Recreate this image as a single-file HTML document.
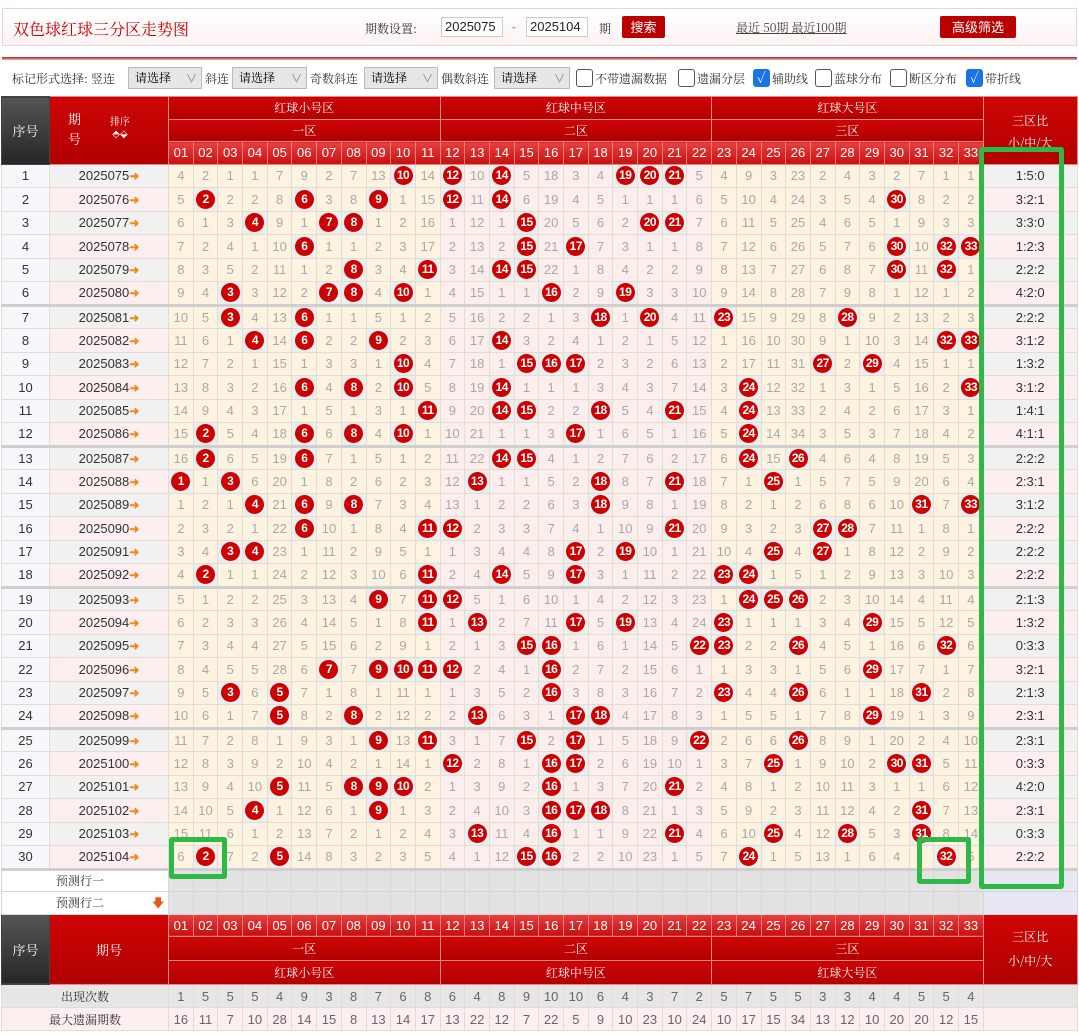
<!DOCTYPE html>
<html><head><meta charset="utf-8">
<style>
*{box-sizing:border-box;margin:0;padding:0}
body{width:1079px;height:1036px;overflow:hidden;background:#fff;font-family:"Liberation Sans","Noto Serif CJK SC",serif;position:relative}
#top{position:absolute;left:2px;top:8px;width:1075px;height:38px;border:1px solid #f2d2d2;background:linear-gradient(#fff,#fdf3f3)}
#top .t{position:absolute;left:10px;top:8px;font-size:16px;color:#c00;font-family:"Noto Serif CJK SC",serif}
#top .s{position:absolute;font-size:12px;color:#333;top:11px;font-family:"Noto Serif CJK SC",serif}
#top .in{position:absolute;top:8px;height:20px;border:1px solid #ccc;background:#fff;font-size:13px;line-height:18px;padding-left:3px;color:#222;font-family:"Liberation Sans Narrow","Liberation Sans",sans-serif}
#top .btn{position:absolute;top:7px;height:22px;background:#b00;color:#fff;font-size:13px;line-height:22px;text-align:center;font-family:"Noto Sans CJK SC",sans-serif;border-radius:2px}
#top .lk{position:absolute;top:10px;font-size:12px;color:#444;text-decoration:underline;font-family:"Noto Serif CJK SC",serif}
#rl{position:absolute;left:2px;top:57px;width:1075px;height:3px;background:linear-gradient(#a22,#e8b0b0)}
#fb{position:absolute;left:0;top:63px;width:1079px;height:30px;font-size:12px;color:#333;font-family:"Noto Serif CJK SC",serif}
#fb span{position:absolute;top:7px}
#fb .sel{position:absolute;top:4px;height:22px;background:#e6e6e6;border:1px solid #bbb;font-size:12px;line-height:20px;padding-left:6px;color:#000}
#fb .sel:after{content:"∨";position:absolute;right:4px;top:0;color:#555;font-size:11px}
#fb .cb{position:absolute;top:6px;width:17px;height:18px;border:1px solid #555;border-radius:3px;background:#fff}
#fb .cb.on{background:#1a73e8;border-color:#1a73e8;color:#fff;font-size:14px;line-height:16px;text-align:center}
table{position:absolute;left:1px;top:96px;border-collapse:collapse;table-layout:fixed;width:1076px}
td{border:1px solid #e4dccf;text-align:center;padding:0;font-size:13px;color:#a8a8a8;font-family:"Liberation Sans Narrow","Liberation Sans",sans-serif;height:23.5px;overflow:hidden;white-space:nowrap}
.h td{color:#fff;font-family:"Noto Serif CJK SC",serif;font-size:12px;border-color:#e88;height:22.5px;background:linear-gradient(#cf0505,#b00000)}
.h td.d{background:linear-gradient(#555,#262626);border-color:#444}
.h td.n{background:linear-gradient(#e84040,#c81010);font-family:"Liberation Sans Narrow","Liberation Sans",sans-serif;font-size:13px;border-color:#f08080}
td.x{background:#f7f7fc;color:#333}
td.q{color:#333;text-align:center}
td.q i{color:#f08a1c;font-style:normal;font-weight:bold;font-size:12px}
tr.o td.q,tr.o td.r{background:#f1f1f1}
tr.e td.q,tr.e td.r{background:#fdeff0}
td.r{color:#333}
td.k{background:#eeeeee}
b{display:inline-block;width:19px;height:19px;border-radius:50%;background:#c00;color:#fff;line-height:19px;font-size:12px;vertical-align:middle;letter-spacing:-0.5px}
tr.sep td{border-bottom:3px solid #cfcfcf}
.c1{background:#fef3e1}.c2{background:#fdeeee}
.pr td{background:#e2e2e2;border-color:#d6d6d6;height:22.5px}
.pr td.w{background:#fff;color:#333;font-family:"Noto Serif CJK SC",serif;font-size:12px;text-align:left;padding-left:54px}
.pr td.v{background:#e8e8f4}
.st td{background:#e6e6e6;color:#666;height:23px}
.st2 td{background:#fdeff0;color:#666;height:23px}
.st td.w,.st2 td.w{font-family:"Noto Serif CJK SC",serif;font-size:12px;color:#333}
.g{position:absolute;border:5px solid #2eb845;border-radius:3px}
</style></head><body>
<div id="top">
<div class="t">双色球红球三分区走势图</div>
<div class="s" style="left:362px">期数设置:</div>
<div class="in" style="left:438px;width:62px">2025075</div>
<div class="s" style="left:509px;top:9px">-</div>
<div class="in" style="left:523px;width:62px">2025104</div>
<div class="s" style="left:596px">期</div>
<div class="btn" style="left:619px;width:43px">搜索</div>
<div class="lk" style="left:733px">最近 50期 最近100期</div>
<div class="btn" style="left:937px;width:76px">高级筛选</div>
</div>
<div id="rl"></div>
<div id="fb">
<span style="left:12px">标记形式选择: 竖连</span>
<div class="sel" style="left:128px;width:74px">请选择</div>
<span style="left:205px">斜连</span>
<div class="sel" style="left:232px;width:75px">请选择</div>
<span style="left:310px">奇数斜连</span>
<div class="sel" style="left:364px;width:74px">请选择</div>
<span style="left:441px">偶数斜连</span>
<div class="sel" style="left:494px;width:76px">请选择</div>
<div class="cb" style="left:576px"></div><span style="left:595px">不带遗漏数据</span>
<div class="cb" style="left:678px"></div><span style="left:697px">遗漏分层</span>
<div class="cb on" style="left:753px">✓</div><span style="left:772px">辅助线</span>
<div class="cb" style="left:815px"></div><span style="left:834px">蓝球分布</span>
<div class="cb" style="left:890px"></div><span style="left:909px">断区分布</span>
<div class="cb on" style="left:966px">✓</div><span style="left:985px">带折线</span>
</div>
<table>
<colgroup><col style="width:48px"><col style="width:119px">
<col class="c1" span="11" style="width:24.7px"><col class="c2" span="11" style="width:24.7px"><col class="c1" span="11" style="width:24.7px"><col style="width:94px"></colgroup>
<tr class="h"><td class="d" rowspan="3" style="font-size:13px">序号</td><td rowspan="3"><div style="position:relative;height:66px"><span style="position:absolute;left:18px;top:12px;font-size:13px;line-height:20px">期<br>号</span><span style="position:absolute;left:60px;top:18px;font-size:10px;line-height:12px">排序<br>⬘⬙</span></div></td><td colspan="11">红球小号区</td><td colspan="11">红球中号区</td><td colspan="11">红球大号区</td><td rowspan="3" style="line-height:22px;padding-top:4px;font-size:12px">三区比<br>小/中/大</td></tr>
<tr class="h"><td colspan="11">一区</td><td colspan="11">二区</td><td colspan="11">三区</td></tr>
<tr class="h"><td class="n">01</td><td class="n">02</td><td class="n">03</td><td class="n">04</td><td class="n">05</td><td class="n">06</td><td class="n">07</td><td class="n">08</td><td class="n">09</td><td class="n">10</td><td class="n">11</td><td class="n">12</td><td class="n">13</td><td class="n">14</td><td class="n">15</td><td class="n">16</td><td class="n">17</td><td class="n">18</td><td class="n">19</td><td class="n">20</td><td class="n">21</td><td class="n">22</td><td class="n">23</td><td class="n">24</td><td class="n">25</td><td class="n">26</td><td class="n">27</td><td class="n">28</td><td class="n">29</td><td class="n">30</td><td class="n">31</td><td class="n">32</td><td class="n">33</td></tr>
<tr class="o"><td class="x">1</td><td class="q">2025075<i>➜</i></td><td>4</td><td>2</td><td>1</td><td>1</td><td>7</td><td>9</td><td>2</td><td>7</td><td>13</td><td class="k"><b>10</b></td><td>14</td><td class="k"><b>12</b></td><td>10</td><td class="k"><b>14</b></td><td>5</td><td>18</td><td>3</td><td>4</td><td class="k"><b>19</b></td><td class="k"><b>20</b></td><td class="k"><b>21</b></td><td>5</td><td>4</td><td>9</td><td>3</td><td>23</td><td>2</td><td>4</td><td>3</td><td>2</td><td>7</td><td>1</td><td>1</td><td class="r">1:5:0</td></tr>
<tr class="e"><td class="x">2</td><td class="q">2025076<i>➜</i></td><td>5</td><td class="k"><b>2</b></td><td>2</td><td>2</td><td>8</td><td class="k"><b>6</b></td><td>3</td><td>8</td><td class="k"><b>9</b></td><td>1</td><td>15</td><td class="k"><b>12</b></td><td>11</td><td class="k"><b>14</b></td><td>6</td><td>19</td><td>4</td><td>5</td><td>1</td><td>1</td><td>1</td><td>6</td><td>5</td><td>10</td><td>4</td><td>24</td><td>3</td><td>5</td><td>4</td><td class="k"><b>30</b></td><td>8</td><td>2</td><td>2</td><td class="r">3:2:1</td></tr>
<tr class="o"><td class="x">3</td><td class="q">2025077<i>➜</i></td><td>6</td><td>1</td><td>3</td><td class="k"><b>4</b></td><td>9</td><td>1</td><td class="k"><b>7</b></td><td class="k"><b>8</b></td><td>1</td><td>2</td><td>16</td><td>1</td><td>12</td><td>1</td><td class="k"><b>15</b></td><td>20</td><td>5</td><td>6</td><td>2</td><td class="k"><b>20</b></td><td class="k"><b>21</b></td><td>7</td><td>6</td><td>11</td><td>5</td><td>25</td><td>4</td><td>6</td><td>5</td><td>1</td><td>9</td><td>3</td><td>3</td><td class="r">3:3:0</td></tr>
<tr class="e"><td class="x">4</td><td class="q">2025078<i>➜</i></td><td>7</td><td>2</td><td>4</td><td>1</td><td>10</td><td class="k"><b>6</b></td><td>1</td><td>1</td><td>2</td><td>3</td><td>17</td><td>2</td><td>13</td><td>2</td><td class="k"><b>15</b></td><td>21</td><td class="k"><b>17</b></td><td>7</td><td>3</td><td>1</td><td>1</td><td>8</td><td>7</td><td>12</td><td>6</td><td>26</td><td>5</td><td>7</td><td>6</td><td class="k"><b>30</b></td><td>10</td><td class="k"><b>32</b></td><td class="k"><b>33</b></td><td class="r">1:2:3</td></tr>
<tr class="o"><td class="x">5</td><td class="q">2025079<i>➜</i></td><td>8</td><td>3</td><td>5</td><td>2</td><td>11</td><td>1</td><td>2</td><td class="k"><b>8</b></td><td>3</td><td>4</td><td class="k"><b>11</b></td><td>3</td><td>14</td><td class="k"><b>14</b></td><td class="k"><b>15</b></td><td>22</td><td>1</td><td>8</td><td>4</td><td>2</td><td>2</td><td>9</td><td>8</td><td>13</td><td>7</td><td>27</td><td>6</td><td>8</td><td>7</td><td class="k"><b>30</b></td><td>11</td><td class="k"><b>32</b></td><td>1</td><td class="r">2:2:2</td></tr>
<tr class="e sep"><td class="x">6</td><td class="q">2025080<i>➜</i></td><td>9</td><td>4</td><td class="k"><b>3</b></td><td>3</td><td>12</td><td>2</td><td class="k"><b>7</b></td><td class="k"><b>8</b></td><td>4</td><td class="k"><b>10</b></td><td>1</td><td>4</td><td>15</td><td>1</td><td>1</td><td class="k"><b>16</b></td><td>2</td><td>9</td><td class="k"><b>19</b></td><td>3</td><td>3</td><td>10</td><td>9</td><td>14</td><td>8</td><td>28</td><td>7</td><td>9</td><td>8</td><td>1</td><td>12</td><td>1</td><td>2</td><td class="r">4:2:0</td></tr>
<tr class="o"><td class="x">7</td><td class="q">2025081<i>➜</i></td><td>10</td><td>5</td><td class="k"><b>3</b></td><td>4</td><td>13</td><td class="k"><b>6</b></td><td>1</td><td>1</td><td>5</td><td>1</td><td>2</td><td>5</td><td>16</td><td>2</td><td>2</td><td>1</td><td>3</td><td class="k"><b>18</b></td><td>1</td><td class="k"><b>20</b></td><td>4</td><td>11</td><td class="k"><b>23</b></td><td>15</td><td>9</td><td>29</td><td>8</td><td class="k"><b>28</b></td><td>9</td><td>2</td><td>13</td><td>2</td><td>3</td><td class="r">2:2:2</td></tr>
<tr class="e"><td class="x">8</td><td class="q">2025082<i>➜</i></td><td>11</td><td>6</td><td>1</td><td class="k"><b>4</b></td><td>14</td><td class="k"><b>6</b></td><td>2</td><td>2</td><td class="k"><b>9</b></td><td>2</td><td>3</td><td>6</td><td>17</td><td class="k"><b>14</b></td><td>3</td><td>2</td><td>4</td><td>1</td><td>2</td><td>1</td><td>5</td><td>12</td><td>1</td><td>16</td><td>10</td><td>30</td><td>9</td><td>1</td><td>10</td><td>3</td><td>14</td><td class="k"><b>32</b></td><td class="k"><b>33</b></td><td class="r">3:1:2</td></tr>
<tr class="o"><td class="x">9</td><td class="q">2025083<i>➜</i></td><td>12</td><td>7</td><td>2</td><td>1</td><td>15</td><td>1</td><td>3</td><td>3</td><td>1</td><td class="k"><b>10</b></td><td>4</td><td>7</td><td>18</td><td>1</td><td class="k"><b>15</b></td><td class="k"><b>16</b></td><td class="k"><b>17</b></td><td>2</td><td>3</td><td>2</td><td>6</td><td>13</td><td>2</td><td>17</td><td>11</td><td>31</td><td class="k"><b>27</b></td><td>2</td><td class="k"><b>29</b></td><td>4</td><td>15</td><td>1</td><td>1</td><td class="r">1:3:2</td></tr>
<tr class="e"><td class="x">10</td><td class="q">2025084<i>➜</i></td><td>13</td><td>8</td><td>3</td><td>2</td><td>16</td><td class="k"><b>6</b></td><td>4</td><td class="k"><b>8</b></td><td>2</td><td class="k"><b>10</b></td><td>5</td><td>8</td><td>19</td><td class="k"><b>14</b></td><td>1</td><td>1</td><td>1</td><td>3</td><td>4</td><td>3</td><td>7</td><td>14</td><td>3</td><td class="k"><b>24</b></td><td>12</td><td>32</td><td>1</td><td>3</td><td>1</td><td>5</td><td>16</td><td>2</td><td class="k"><b>33</b></td><td class="r">3:1:2</td></tr>
<tr class="o"><td class="x">11</td><td class="q">2025085<i>➜</i></td><td>14</td><td>9</td><td>4</td><td>3</td><td>17</td><td>1</td><td>5</td><td>1</td><td>3</td><td>1</td><td class="k"><b>11</b></td><td>9</td><td>20</td><td class="k"><b>14</b></td><td class="k"><b>15</b></td><td>2</td><td>2</td><td class="k"><b>18</b></td><td>5</td><td>4</td><td class="k"><b>21</b></td><td>15</td><td>4</td><td class="k"><b>24</b></td><td>13</td><td>33</td><td>2</td><td>4</td><td>2</td><td>6</td><td>17</td><td>3</td><td>1</td><td class="r">1:4:1</td></tr>
<tr class="e sep"><td class="x">12</td><td class="q">2025086<i>➜</i></td><td>15</td><td class="k"><b>2</b></td><td>5</td><td>4</td><td>18</td><td class="k"><b>6</b></td><td>6</td><td class="k"><b>8</b></td><td>4</td><td class="k"><b>10</b></td><td>1</td><td>10</td><td>21</td><td>1</td><td>1</td><td>3</td><td class="k"><b>17</b></td><td>1</td><td>6</td><td>5</td><td>1</td><td>16</td><td>5</td><td class="k"><b>24</b></td><td>14</td><td>34</td><td>3</td><td>5</td><td>3</td><td>7</td><td>18</td><td>4</td><td>2</td><td class="r">4:1:1</td></tr>
<tr class="o"><td class="x">13</td><td class="q">2025087<i>➜</i></td><td>16</td><td class="k"><b>2</b></td><td>6</td><td>5</td><td>19</td><td class="k"><b>6</b></td><td>7</td><td>1</td><td>5</td><td>1</td><td>2</td><td>11</td><td>22</td><td class="k"><b>14</b></td><td class="k"><b>15</b></td><td>4</td><td>1</td><td>2</td><td>7</td><td>6</td><td>2</td><td>17</td><td>6</td><td class="k"><b>24</b></td><td>15</td><td class="k"><b>26</b></td><td>4</td><td>6</td><td>4</td><td>8</td><td>19</td><td>5</td><td>3</td><td class="r">2:2:2</td></tr>
<tr class="e"><td class="x">14</td><td class="q">2025088<i>➜</i></td><td class="k"><b>1</b></td><td>1</td><td class="k"><b>3</b></td><td>6</td><td>20</td><td>1</td><td>8</td><td>2</td><td>6</td><td>2</td><td>3</td><td>12</td><td class="k"><b>13</b></td><td>1</td><td>1</td><td>5</td><td>2</td><td class="k"><b>18</b></td><td>8</td><td>7</td><td class="k"><b>21</b></td><td>18</td><td>7</td><td>1</td><td class="k"><b>25</b></td><td>1</td><td>5</td><td>7</td><td>5</td><td>9</td><td>20</td><td>6</td><td>4</td><td class="r">2:3:1</td></tr>
<tr class="o"><td class="x">15</td><td class="q">2025089<i>➜</i></td><td>1</td><td>2</td><td>1</td><td class="k"><b>4</b></td><td>21</td><td class="k"><b>6</b></td><td>9</td><td class="k"><b>8</b></td><td>7</td><td>3</td><td>4</td><td>13</td><td>1</td><td>2</td><td>2</td><td>6</td><td>3</td><td class="k"><b>18</b></td><td>9</td><td>8</td><td>1</td><td>19</td><td>8</td><td>2</td><td>1</td><td>2</td><td>6</td><td>8</td><td>6</td><td>10</td><td class="k"><b>31</b></td><td>7</td><td class="k"><b>33</b></td><td class="r">3:1:2</td></tr>
<tr class="e"><td class="x">16</td><td class="q">2025090<i>➜</i></td><td>2</td><td>3</td><td>2</td><td>1</td><td>22</td><td class="k"><b>6</b></td><td>10</td><td>1</td><td>8</td><td>4</td><td class="k"><b>11</b></td><td class="k"><b>12</b></td><td>2</td><td>3</td><td>3</td><td>7</td><td>4</td><td>1</td><td>10</td><td>9</td><td class="k"><b>21</b></td><td>20</td><td>9</td><td>3</td><td>2</td><td>3</td><td class="k"><b>27</b></td><td class="k"><b>28</b></td><td>7</td><td>11</td><td>1</td><td>8</td><td>1</td><td class="r">2:2:2</td></tr>
<tr class="o"><td class="x">17</td><td class="q">2025091<i>➜</i></td><td>3</td><td>4</td><td class="k"><b>3</b></td><td class="k"><b>4</b></td><td>23</td><td>1</td><td>11</td><td>2</td><td>9</td><td>5</td><td>1</td><td>1</td><td>3</td><td>4</td><td>4</td><td>8</td><td class="k"><b>17</b></td><td>2</td><td class="k"><b>19</b></td><td>10</td><td>1</td><td>21</td><td>10</td><td>4</td><td class="k"><b>25</b></td><td>4</td><td class="k"><b>27</b></td><td>1</td><td>8</td><td>12</td><td>2</td><td>9</td><td>2</td><td class="r">2:2:2</td></tr>
<tr class="e sep"><td class="x">18</td><td class="q">2025092<i>➜</i></td><td>4</td><td class="k"><b>2</b></td><td>1</td><td>1</td><td>24</td><td>2</td><td>12</td><td>3</td><td>10</td><td>6</td><td class="k"><b>11</b></td><td>2</td><td>4</td><td class="k"><b>14</b></td><td>5</td><td>9</td><td class="k"><b>17</b></td><td>3</td><td>1</td><td>11</td><td>2</td><td>22</td><td class="k"><b>23</b></td><td class="k"><b>24</b></td><td>1</td><td>5</td><td>1</td><td>2</td><td>9</td><td>13</td><td>3</td><td>10</td><td>3</td><td class="r">2:2:2</td></tr>
<tr class="o"><td class="x">19</td><td class="q">2025093<i>➜</i></td><td>5</td><td>1</td><td>2</td><td>2</td><td>25</td><td>3</td><td>13</td><td>4</td><td class="k"><b>9</b></td><td>7</td><td class="k"><b>11</b></td><td class="k"><b>12</b></td><td>5</td><td>1</td><td>6</td><td>10</td><td>1</td><td>4</td><td>2</td><td>12</td><td>3</td><td>23</td><td>1</td><td class="k"><b>24</b></td><td class="k"><b>25</b></td><td class="k"><b>26</b></td><td>2</td><td>3</td><td>10</td><td>14</td><td>4</td><td>11</td><td>4</td><td class="r">2:1:3</td></tr>
<tr class="e"><td class="x">20</td><td class="q">2025094<i>➜</i></td><td>6</td><td>2</td><td>3</td><td>3</td><td>26</td><td>4</td><td>14</td><td>5</td><td>1</td><td>8</td><td class="k"><b>11</b></td><td>1</td><td class="k"><b>13</b></td><td>2</td><td>7</td><td>11</td><td class="k"><b>17</b></td><td>5</td><td class="k"><b>19</b></td><td>13</td><td>4</td><td>24</td><td class="k"><b>23</b></td><td>1</td><td>1</td><td>1</td><td>3</td><td>4</td><td class="k"><b>29</b></td><td>15</td><td>5</td><td>12</td><td>5</td><td class="r">1:3:2</td></tr>
<tr class="o"><td class="x">21</td><td class="q">2025095<i>➜</i></td><td>7</td><td>3</td><td>4</td><td>4</td><td>27</td><td>5</td><td>15</td><td>6</td><td>2</td><td>9</td><td>1</td><td>2</td><td>1</td><td>3</td><td class="k"><b>15</b></td><td class="k"><b>16</b></td><td>1</td><td>6</td><td>1</td><td>14</td><td>5</td><td class="k"><b>22</b></td><td class="k"><b>23</b></td><td>2</td><td>2</td><td class="k"><b>26</b></td><td>4</td><td>5</td><td>1</td><td>16</td><td>6</td><td class="k"><b>32</b></td><td>6</td><td class="r">0:3:3</td></tr>
<tr class="e"><td class="x">22</td><td class="q">2025096<i>➜</i></td><td>8</td><td>4</td><td>5</td><td>5</td><td>28</td><td>6</td><td class="k"><b>7</b></td><td>7</td><td class="k"><b>9</b></td><td class="k"><b>10</b></td><td class="k"><b>11</b></td><td class="k"><b>12</b></td><td>2</td><td>4</td><td>1</td><td class="k"><b>16</b></td><td>2</td><td>7</td><td>2</td><td>15</td><td>6</td><td>1</td><td>1</td><td>3</td><td>3</td><td>1</td><td>5</td><td>6</td><td class="k"><b>29</b></td><td>17</td><td>7</td><td>1</td><td>7</td><td class="r">3:2:1</td></tr>
<tr class="o"><td class="x">23</td><td class="q">2025097<i>➜</i></td><td>9</td><td>5</td><td class="k"><b>3</b></td><td>6</td><td class="k"><b>5</b></td><td>7</td><td>1</td><td>8</td><td>1</td><td>11</td><td>1</td><td>1</td><td>3</td><td>5</td><td>2</td><td class="k"><b>16</b></td><td>3</td><td>8</td><td>3</td><td>16</td><td>7</td><td>2</td><td class="k"><b>23</b></td><td>4</td><td>4</td><td class="k"><b>26</b></td><td>6</td><td>1</td><td>1</td><td>18</td><td class="k"><b>31</b></td><td>2</td><td>8</td><td class="r">2:1:3</td></tr>
<tr class="e sep"><td class="x">24</td><td class="q">2025098<i>➜</i></td><td>10</td><td>6</td><td>1</td><td>7</td><td class="k"><b>5</b></td><td>8</td><td>2</td><td class="k"><b>8</b></td><td>2</td><td>12</td><td>2</td><td>2</td><td class="k"><b>13</b></td><td>6</td><td>3</td><td>1</td><td class="k"><b>17</b></td><td class="k"><b>18</b></td><td>4</td><td>17</td><td>8</td><td>3</td><td>1</td><td>5</td><td>5</td><td>1</td><td>7</td><td>8</td><td class="k"><b>29</b></td><td>19</td><td>1</td><td>3</td><td>9</td><td class="r">2:3:1</td></tr>
<tr class="o"><td class="x">25</td><td class="q">2025099<i>➜</i></td><td>11</td><td>7</td><td>2</td><td>8</td><td>1</td><td>9</td><td>3</td><td>1</td><td class="k"><b>9</b></td><td>13</td><td class="k"><b>11</b></td><td>3</td><td>1</td><td>7</td><td class="k"><b>15</b></td><td>2</td><td class="k"><b>17</b></td><td>1</td><td>5</td><td>18</td><td>9</td><td class="k"><b>22</b></td><td>2</td><td>6</td><td>6</td><td class="k"><b>26</b></td><td>8</td><td>9</td><td>1</td><td>20</td><td>2</td><td>4</td><td>10</td><td class="r">2:3:1</td></tr>
<tr class="e"><td class="x">26</td><td class="q">2025100<i>➜</i></td><td>12</td><td>8</td><td>3</td><td>9</td><td>2</td><td>10</td><td>4</td><td>2</td><td>1</td><td>14</td><td>1</td><td class="k"><b>12</b></td><td>2</td><td>8</td><td>1</td><td class="k"><b>16</b></td><td class="k"><b>17</b></td><td>2</td><td>6</td><td>19</td><td>10</td><td>1</td><td>3</td><td>7</td><td class="k"><b>25</b></td><td>1</td><td>9</td><td>10</td><td>2</td><td class="k"><b>30</b></td><td class="k"><b>31</b></td><td>5</td><td>11</td><td class="r">0:3:3</td></tr>
<tr class="o"><td class="x">27</td><td class="q">2025101<i>➜</i></td><td>13</td><td>9</td><td>4</td><td>10</td><td class="k"><b>5</b></td><td>11</td><td>5</td><td class="k"><b>8</b></td><td class="k"><b>9</b></td><td class="k"><b>10</b></td><td>2</td><td>1</td><td>3</td><td>9</td><td>2</td><td class="k"><b>16</b></td><td>1</td><td>3</td><td>7</td><td>20</td><td class="k"><b>21</b></td><td>2</td><td>4</td><td>8</td><td>1</td><td>2</td><td>10</td><td>11</td><td>3</td><td>1</td><td>1</td><td>6</td><td>12</td><td class="r">4:2:0</td></tr>
<tr class="e"><td class="x">28</td><td class="q">2025102<i>➜</i></td><td>14</td><td>10</td><td>5</td><td class="k"><b>4</b></td><td>1</td><td>12</td><td>6</td><td>1</td><td class="k"><b>9</b></td><td>1</td><td>3</td><td>2</td><td>4</td><td>10</td><td>3</td><td class="k"><b>16</b></td><td class="k"><b>17</b></td><td class="k"><b>18</b></td><td>8</td><td>21</td><td>1</td><td>3</td><td>5</td><td>9</td><td>2</td><td>3</td><td>11</td><td>12</td><td>4</td><td>2</td><td class="k"><b>31</b></td><td>7</td><td>13</td><td class="r">2:3:1</td></tr>
<tr class="o"><td class="x">29</td><td class="q">2025103<i>➜</i></td><td>15</td><td>11</td><td>6</td><td>1</td><td>2</td><td>13</td><td>7</td><td>2</td><td>1</td><td>2</td><td>4</td><td>3</td><td class="k"><b>13</b></td><td>11</td><td>4</td><td class="k"><b>16</b></td><td>1</td><td>1</td><td>9</td><td>22</td><td class="k"><b>21</b></td><td>4</td><td>6</td><td>10</td><td class="k"><b>25</b></td><td>4</td><td>12</td><td class="k"><b>28</b></td><td>5</td><td>3</td><td class="k"><b>31</b></td><td>8</td><td>14</td><td class="r">0:3:3</td></tr>
<tr class="e sep"><td class="x">30</td><td class="q">2025104<i>➜</i></td><td>6</td><td class="k"><b>2</b></td><td>7</td><td>2</td><td class="k"><b>5</b></td><td>14</td><td>8</td><td>3</td><td>2</td><td>3</td><td>5</td><td>4</td><td>1</td><td>12</td><td class="k"><b>15</b></td><td class="k"><b>16</b></td><td>2</td><td>2</td><td>10</td><td>23</td><td>1</td><td>5</td><td>7</td><td class="k"><b>24</b></td><td>1</td><td>5</td><td>13</td><td>1</td><td>6</td><td>4</td><td></td><td class="k"><b>32</b></td><td>5</td><td class="r">2:2:2</td></tr>
<tr class="pr"><td class="w" colspan="2">预测行一</td><td></td><td></td><td></td><td></td><td></td><td></td><td></td><td></td><td></td><td></td><td></td><td></td><td></td><td></td><td></td><td></td><td></td><td></td><td></td><td></td><td></td><td></td><td></td><td></td><td></td><td></td><td></td><td></td><td></td><td></td><td></td><td></td><td></td><td class="v"></td></tr>
<tr class="pr"><td class="w" colspan="2" style="position:relative">预测行二<span style="position:absolute;left:150px;top:2px;color:#e8561c;font-size:12px">🡇</span></td><td></td><td></td><td></td><td></td><td></td><td></td><td></td><td></td><td></td><td></td><td></td><td></td><td></td><td></td><td></td><td></td><td></td><td></td><td></td><td></td><td></td><td></td><td></td><td></td><td></td><td></td><td></td><td></td><td></td><td></td><td></td><td></td><td></td><td class="v"></td></tr>
<tr class="h"><td class="d" rowspan="3" style="font-size:13px">序号</td><td rowspan="3" style="font-size:13px">期号</td><td class="n">01</td><td class="n">02</td><td class="n">03</td><td class="n">04</td><td class="n">05</td><td class="n">06</td><td class="n">07</td><td class="n">08</td><td class="n">09</td><td class="n">10</td><td class="n">11</td><td class="n">12</td><td class="n">13</td><td class="n">14</td><td class="n">15</td><td class="n">16</td><td class="n">17</td><td class="n">18</td><td class="n">19</td><td class="n">20</td><td class="n">21</td><td class="n">22</td><td class="n">23</td><td class="n">24</td><td class="n">25</td><td class="n">26</td><td class="n">27</td><td class="n">28</td><td class="n">29</td><td class="n">30</td><td class="n">31</td><td class="n">32</td><td class="n">33</td><td rowspan="3" style="line-height:24px;font-size:12px">三区比<br>小/中/大</td></tr>
<tr class="h"><td colspan="11" style="height:24px">一区</td><td colspan="11">二区</td><td colspan="11">三区</td></tr>
<tr class="h"><td colspan="11" style="height:24px">红球小号区</td><td colspan="11">红球中号区</td><td colspan="11">红球大号区</td></tr>
<tr class="st"><td class="w" colspan="2">出现次数</td><td>1</td><td>5</td><td>5</td><td>5</td><td>4</td><td>9</td><td>3</td><td>8</td><td>7</td><td>6</td><td>8</td><td>6</td><td>4</td><td>8</td><td>9</td><td>10</td><td>10</td><td>6</td><td>4</td><td>3</td><td>7</td><td>2</td><td>5</td><td>7</td><td>5</td><td>5</td><td>3</td><td>3</td><td>4</td><td>4</td><td>5</td><td>5</td><td>4</td><td></td></tr>
<tr class="st2"><td class="w" colspan="2">最大遗漏期数</td><td>16</td><td>11</td><td>7</td><td>10</td><td>28</td><td>14</td><td>15</td><td>8</td><td>13</td><td>14</td><td>17</td><td>13</td><td>22</td><td>12</td><td>7</td><td>22</td><td>5</td><td>9</td><td>10</td><td>23</td><td>10</td><td>24</td><td>10</td><td>17</td><td>15</td><td>34</td><td>13</td><td>12</td><td>10</td><td>20</td><td>20</td><td>12</td><td>15</td><td></td></tr>
</table>
<div class="g" style="left:979px;top:147px;width:85px;height:742px"></div>
<div class="g" style="left:169px;top:837px;width:58px;height:42px"></div>
<div class="g" style="left:917px;top:837px;width:54px;height:47px"></div>
</body></html>
